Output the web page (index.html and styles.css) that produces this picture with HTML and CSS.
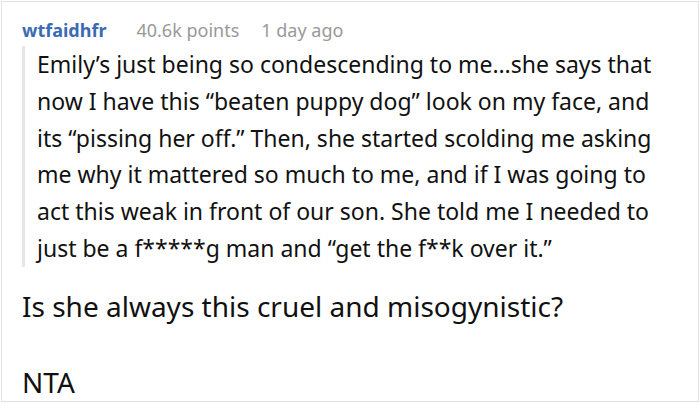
FILE: index.html
```html
<!DOCTYPE html>
<html>
<head>
<meta charset="utf-8">
<link rel="stylesheet" href="styles.css">
</head>
<body>
<div class="card">
  <div class="meta">
    <span class="user">wtfaidhfr</span>
    <span class="info points">40.6k points</span>
    <span class="info">1 day ago</span>
  </div>
  <blockquote class="quote">Emily’s just being so condescending to me…she says that now I have this “beaten puppy dog” look on my face, and its “pissing her off.” Then, she started scolding me asking me why it mattered so much to me, and if I was going to act this weak in front of our son. She told me I needed to just be a f*****g man and “get the f**k over it.”</blockquote>
  <p class="para">Is she always this cruel and misogynistic?</p>
  <p class="para">NTA</p>
</div>
</body>
</html>
```

FILE: styles.css
```css
html, body {
  margin: 0;
  padding: 0;
  background: #ffffff;
}
body {
  font-family: "Noto Sans", sans-serif;
  color: #111111;
  overflow: hidden;
  height: 403px;
}
.card {
  margin: 1px;
  height: 399px;
  border: 1px solid #e2e2e2;
  padding: 0 20px;
  overflow: hidden;
}
.meta {
  display: flex;
  font-size: 18px;
  line-height: 24px;
  padding-top: 16px;
}
.user {
  color: #3a6bb4;
  font-weight: bold;
  margin-right: 30px;
}
.points {
  margin-right: 22px;
}
.info {
  color: #999999;
}
.quote {
  margin: 4px 13px 0 0;
  border-left: 3px solid #e6e6e6;
  padding: 0 0 0 12px;
  font-size: 23px;
  line-height: 36.8px;
}
.para {
  margin: 20px 0 0 0;
  font-size: 28px;
  line-height: 38px;
}
.para + .para {
  margin-top: 38px;
}
```
